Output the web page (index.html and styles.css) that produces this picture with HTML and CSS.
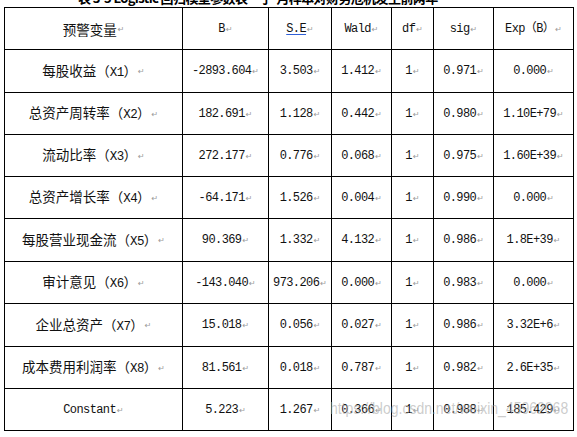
FILE: index.html
```html
<!DOCTYPE html>
<html lang="zh">
<head>
<meta charset="utf-8">
<title>Logistic 回归模型参数表</title>
<link rel="stylesheet" href="styles.css">
</head>
<body>
<div class="title"><span class="title-text">表 3-5 Logistic 回归模型参数表—于-月样本对财务危机发生前两年</span></div>
<div class="table">
  <div class="cell"><span class="zh">预警变量</span><span class="pm">↵</span></div>
  <div class="cell"><span class="n">B</span><span class="pm">↵</span></div>
  <div class="cell"><span class="n se">S.E</span><span class="pm">↵</span></div>
  <div class="cell"><span class="n">Wald</span><span class="pm">↵</span></div>
  <div class="cell"><span class="n">df</span><span class="pm">↵</span></div>
  <div class="cell"><span class="n">sig</span><span class="pm">↵</span></div>
  <div class="cell"><span class="n">Exp（B）</span><span class="pm">↵</span></div>

  <div class="cell"><span class="zh">每股收益（<span class="n">X1</span>）</span><span class="pm">↵</span></div>
  <div class="cell"><span class="n">-2893.604</span><span class="pm">↵</span></div>
  <div class="cell"><span class="n">3.503</span><span class="pm">↵</span></div>
  <div class="cell"><span class="n">1.412</span><span class="pm">↵</span></div>
  <div class="cell"><span class="n">1</span><span class="pm">↵</span></div>
  <div class="cell"><span class="n">0.971</span><span class="pm">↵</span></div>
  <div class="cell"><span class="n">0.000</span><span class="pm">↵</span></div>

  <div class="cell"><span class="zh">总资产周转率（<span class="n">X2</span>）</span><span class="pm">↵</span></div>
  <div class="cell"><span class="n">182.691</span><span class="pm">↵</span></div>
  <div class="cell"><span class="n">1.128</span><span class="pm">↵</span></div>
  <div class="cell"><span class="n">0.442</span><span class="pm">↵</span></div>
  <div class="cell"><span class="n">1</span><span class="pm">↵</span></div>
  <div class="cell"><span class="n">0.980</span><span class="pm">↵</span></div>
  <div class="cell"><span class="n">1.10E+79</span><span class="pm">↵</span></div>

  <div class="cell"><span class="zh">流动比率（<span class="n">X3</span>）</span><span class="pm">↵</span></div>
  <div class="cell"><span class="n">272.177</span><span class="pm">↵</span></div>
  <div class="cell"><span class="n">0.776</span><span class="pm">↵</span></div>
  <div class="cell"><span class="n">0.068</span><span class="pm">↵</span></div>
  <div class="cell"><span class="n">1</span><span class="pm">↵</span></div>
  <div class="cell"><span class="n">0.975</span><span class="pm">↵</span></div>
  <div class="cell"><span class="n">1.60E+39</span><span class="pm">↵</span></div>

  <div class="cell"><span class="zh">总资产增长率（<span class="n">X4</span>）</span><span class="pm">↵</span></div>
  <div class="cell"><span class="n">-64.171</span><span class="pm">↵</span></div>
  <div class="cell"><span class="n">1.526</span><span class="pm">↵</span></div>
  <div class="cell"><span class="n">0.004</span><span class="pm">↵</span></div>
  <div class="cell"><span class="n">1</span><span class="pm">↵</span></div>
  <div class="cell"><span class="n">0.990</span><span class="pm">↵</span></div>
  <div class="cell"><span class="n">0.000</span><span class="pm">↵</span></div>

  <div class="cell"><span class="zh">每股营业现金流（<span class="n">X5</span>）</span><span class="pm">↵</span></div>
  <div class="cell"><span class="n">90.369</span><span class="pm">↵</span></div>
  <div class="cell"><span class="n">1.332</span><span class="pm">↵</span></div>
  <div class="cell"><span class="n">4.132</span><span class="pm">↵</span></div>
  <div class="cell"><span class="n">1</span><span class="pm">↵</span></div>
  <div class="cell"><span class="n">0.986</span><span class="pm">↵</span></div>
  <div class="cell"><span class="n">1.8E+39</span><span class="pm">↵</span></div>

  <div class="cell"><span class="zh">审计意见（<span class="n">X6</span>）</span><span class="pm">↵</span></div>
  <div class="cell"><span class="n">-143.040</span><span class="pm">↵</span></div>
  <div class="cell"><span class="n">973.206</span><span class="pm">↵</span></div>
  <div class="cell"><span class="n">0.000</span><span class="pm">↵</span></div>
  <div class="cell"><span class="n">1</span><span class="pm">↵</span></div>
  <div class="cell"><span class="n">0.983</span><span class="pm">↵</span></div>
  <div class="cell"><span class="n">0.000</span><span class="pm">↵</span></div>

  <div class="cell"><span class="zh">企业总资产（<span class="n">X7</span>）</span><span class="pm">↵</span></div>
  <div class="cell"><span class="n">15.018</span><span class="pm">↵</span></div>
  <div class="cell"><span class="n">0.056</span><span class="pm">↵</span></div>
  <div class="cell"><span class="n">0.027</span><span class="pm">↵</span></div>
  <div class="cell"><span class="n">1</span><span class="pm">↵</span></div>
  <div class="cell"><span class="n">0.986</span><span class="pm">↵</span></div>
  <div class="cell"><span class="n">3.32E+6</span><span class="pm">↵</span></div>

  <div class="cell"><span class="zh">成本费用利润率（<span class="n">X8</span>）</span><span class="pm">↵</span></div>
  <div class="cell"><span class="n">81.561</span><span class="pm">↵</span></div>
  <div class="cell"><span class="n">0.018</span><span class="pm">↵</span></div>
  <div class="cell"><span class="n">0.787</span><span class="pm">↵</span></div>
  <div class="cell"><span class="n">1</span><span class="pm">↵</span></div>
  <div class="cell"><span class="n">0.982</span><span class="pm">↵</span></div>
  <div class="cell"><span class="n">2.6E+35</span><span class="pm">↵</span></div>

  <div class="cell"><span class="n">Constant</span><span class="pm">↵</span></div>
  <div class="cell"><span class="n">5.223</span><span class="pm">↵</span></div>
  <div class="cell"><span class="n">1.267</span><span class="pm">↵</span></div>
  <div class="cell"><span class="n">0.366</span><span class="pm">↵</span></div>
  <div class="cell"><span class="n">1</span><span class="pm">↵</span></div>
  <div class="cell"><span class="n">0.988</span><span class="pm">↵</span></div>
  <div class="cell"><span class="n">185.429</span><span class="pm">↵</span></div>
</div>
<div class="watermark">https://blog.csdn.net/weixin_45962068</div>
</body>
</html>
```

FILE: styles.css
```css
html, body {
  margin: 0;
  padding: 0;
  background: #fff;
}

body {
  position: relative;
  width: 577px;
  height: 437px;
  overflow: hidden;
  color: #000;
  font-family: "Noto Sans CJK SC", sans-serif;
}

.title {
  height: 7px;
  display: flex;
  align-items: flex-end;
  padding-left: 78px;
}

.title-text {
  font-size: 13px;
  line-height: 14px;
  font-weight: bold;
  letter-spacing: -0.6px;
  white-space: nowrap;
  margin-bottom: 2px;
  font-family: "Noto Sans CJK SC", sans-serif;
}

.table {
  display: grid;
  grid-template-columns: 178px 86px 63px 60px 42px 60px 80px;
  grid-template-rows: 42px 43px 42px 42px 42px 43px 42px 43px 42px 42px;
  width: max-content;
  margin-left: 4px;
  border-left: 1px solid #000;
  border-top: 1px solid #000;
}

.cell {
  box-sizing: border-box;
  border-right: 1px solid #000;
  border-bottom: 1px solid #000;
  display: flex;
  align-items: center;
  justify-content: center;
  white-space: nowrap;
}

.zh {
  font-family: "Noto Sans CJK SC", sans-serif;
  font-size: 13.5px;
  font-weight: 400;
  line-height: 16px;
  color: #111;
}

.n {
  font-family: "Liberation Mono", "Noto Sans CJK SC", monospace;
  font-size: 12px;
  letter-spacing: -0.6px;
  line-height: 16px;
  color: #111;
}

.zh .n {
  font-size: 12.5px;
}

.se {
  text-decoration: underline;
  text-decoration-color: #2f5fd6;
  text-underline-offset: 2px;
}

.pm {
  font-family: "DejaVu Sans", sans-serif;
  font-size: 8px;
  line-height: 16px;
  color: #9a9a9a;
  margin-left: 1px;
  position: relative;
  top: 1px;
}

.watermark {
  position: absolute;
  left: 330px;
  top: 398px;
  font-family: "Liberation Sans", sans-serif;
  font-size: 14px;
  line-height: 20px;
  color: rgba(170, 170, 170, 0.6);
  white-space: nowrap;
  transform: scaleY(1.2);
  transform-origin: left center;
}
```
